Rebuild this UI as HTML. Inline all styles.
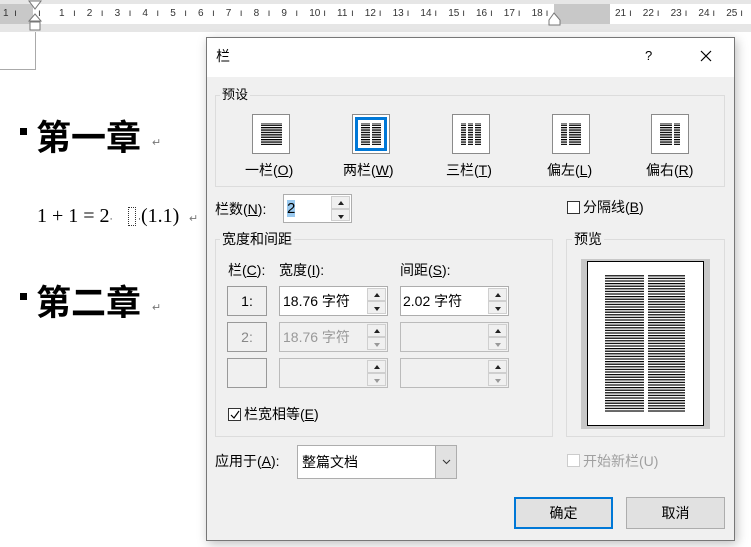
<!DOCTYPE html>
<html><head><meta charset="utf-8">
<style>
*{margin:0;padding:0;box-sizing:border-box}
body{width:751px;height:547px;overflow:hidden;background:#fff;position:relative;font-family:"Liberation Sans","Microsoft YaHei","Noto Sans CJK SC",sans-serif;font-size:13px;color:#000}
.a{position:absolute}
.t{position:absolute;white-space:nowrap;line-height:16px}
.box{position:absolute;border:1px solid #adadad;background:#fff}
.grp{position:absolute;border:1px solid #dcdcdc}
.lbl{position:absolute;background:#f0f0f0;padding:0 2px;line-height:16px;white-space:nowrap}
.spin{position:absolute;right:1px;top:1px;bottom:1px;width:19px}
.spin div{height:50%;border:1px solid #cfcfcf;background:#f0f0f0;position:relative}
.up:after{content:"";position:absolute;left:6px;top:4px;border-left:3px solid transparent;border-right:3px solid transparent;border-bottom:4px solid #222}
.dn:after{content:"";position:absolute;left:6px;top:5px;border-left:3px solid transparent;border-right:3px solid transparent;border-top:4px solid #222}
.dis .dn:after{border-top-color:#999}
.ico{position:absolute;width:38px;height:40px;border:1px solid #8a8a8a;background:#fff}
u{text-decoration:underline}
.cb{position:absolute;width:13px;height:13px;border:1px solid #333;background:#fff}
.hd{position:absolute;white-space:nowrap;font-size:35px;line-height:40px;font-weight:bold;font-family:'Noto Sans CJK SC',sans-serif}
.eq{position:absolute;white-space:nowrap;font-size:20px;line-height:22px;font-family:'Liberation Serif',serif}
</style></head><body>
<!-- ruler -->
<div class="a" style="left:0;top:0;width:751px;height:32px;background:#e6e6e6"></div>
<div class="a" style="left:0;top:4px;width:751px;height:20px;background:#fff"></div>
<div class="a" style="left:0;top:4px;width:33px;height:20px;background:#c8c8c8"></div>
<div class="a" style="left:554px;top:4px;width:56px;height:20px;background:#c8c8c8"></div>
<div class="t" style="left:3px;top:6px;font-size:10px;color:#333">1 &nbsp;ı</div>
<div class="t" id="rl" style="left:0;top:6px;font-size:10px;color:#333"></div>
<svg class="a" style="left:28px;top:0" width="16" height="34"><path d="M1 1h12l-6 8z" fill="#fff" stroke="#777"/><path d="M7 14l6 7H1z" fill="#fff" stroke="#777"/><rect x="2" y="22" width="10" height="8" fill="#fff" stroke="#777"/></svg>
<svg class="a" style="left:548px;top:12px" width="14" height="14"><path d="M6 1l6 7v5H1V8z" fill="#fff" stroke="#777"/></svg>
<div class="a" style="left:0;top:32px;width:36px;height:38px;border-right:1px solid #aaa;border-bottom:1px solid #aaa"></div>
<!-- doc -->
<div class="a" style="left:20px;top:128px;width:7px;height:7px;background:#000"></div>
<div class="hd" style="left:36px;top:116px">第一章</div>
<div class="t" style="left:152px;top:135px;font-size:11px;color:#777">↵</div>
<div class="eq" style="left:37px;top:205px">1 + 1 = 2<span style="font-size:9px">·</span></div>
<div class="a" style="left:128px;top:207px;width:8px;height:19px;border:1px dotted #333"></div>
<div class="eq" style="left:138px;top:205px"><span style="font-size:9px">·</span>(1.1)</div>
<div class="t" style="left:189px;top:211px;font-size:11px;color:#777">↵</div>
<div class="a" style="left:20px;top:293px;width:7px;height:7px;background:#000"></div>
<div class="hd" style="left:36px;top:281px">第二章</div>
<div class="t" style="left:152px;top:300px;font-size:11px;color:#777">↵</div>
<!-- dialog -->
<div class="a" style="left:206px;top:37px;width:529px;height:504px;background:#f0f0f0;border:1px solid #777;box-shadow:2px 3px 10px rgba(0,0,0,.25)">
<div class="a" style="left:0;top:0;width:527px;height:39px;background:#fff"></div>
</div>
<div class="t" style="left:216px;top:48px;font-size:14px">栏</div>
<div class="t" style="left:645px;top:48px;font-size:13px">?</div>
<svg class="a" style="left:700px;top:50px" width="12" height="12"><path d="M1 1l10 10M11 1L1 11" stroke="#000" stroke-width="1.2"/></svg>
<!-- 预设 -->
<div class="grp" style="left:215px;top:95px;width:510px;height:92px"></div>
<div class="lbl" style="left:220px;top:87px">预设</div>
<svg width="0" height="0" style="position:absolute"><defs><pattern id="ln" width="4" height="2.4" patternUnits="userSpaceOnUse"><rect width="4" height="1.3" fill="#000"/></pattern><pattern id="ln2" width="4" height="2.6" patternUnits="userSpaceOnUse"><rect width="4" height="1.2" fill="#000"/></pattern></defs></svg>
<div class="ico" style="left:252px;top:114px"><svg width="36" height="38"><rect x="8" y="8" width="21" height="22" fill="url(#ln)"/></svg></div>
<div class="ico" style="left:352px;top:114px"><div class="a" style="left:2px;top:2px;width:32px;height:34px;border:3px solid #0078d7"></div><svg class="a" width="36" height="38"><rect x="8" y="8" width="9" height="22" fill="url(#ln)"/><rect x="19" y="8" width="9" height="22" fill="url(#ln)"/></svg></div>
<div class="ico" style="left:452px;top:114px"><svg width="36" height="38"><rect x="8" y="8" width="5" height="22" fill="url(#ln)"/><rect x="15" y="8" width="5" height="22" fill="url(#ln)"/><rect x="22" y="8" width="6" height="22" fill="url(#ln)"/></svg></div>
<div class="ico" style="left:552px;top:114px"><svg width="36" height="38"><rect x="8" y="8" width="6" height="22" fill="url(#ln)"/><rect x="16" y="8" width="12" height="22" fill="url(#ln)"/></svg></div>
<div class="ico" style="left:651px;top:114px"><svg width="36" height="38"><rect x="8" y="8" width="12" height="22" fill="url(#ln)"/><rect x="22" y="8" width="6" height="22" fill="url(#ln)"/></svg></div>
<div class="t" style="left:245px;top:162px;font-size:14px">一栏(<u>O</u>)</div>
<div class="t" style="left:343px;top:162px;font-size:14px">两栏(<u>W</u>)</div>
<div class="t" style="left:446px;top:162px;font-size:14px">三栏(<u>T</u>)</div>
<div class="t" style="left:547px;top:162px;font-size:14px">偏左(<u>L</u>)</div>
<div class="t" style="left:646px;top:162px;font-size:14px">偏右(<u>R</u>)</div>
<!-- 栏数 -->
<div class="t" style="left:215px;top:201px;font-size:14px">栏数(<u>N</u>):</div>
<div class="box" style="left:283px;top:194px;width:69px;height:29px"><span class="a" style="left:3px;top:5px;background:#99c9ef;font-size:15px;line-height:17px">2</span><div class="spin"><div class="up"></div><div class="dn"></div></div></div>
<div class="cb" style="left:567px;top:201px"></div>
<div class="t" style="left:583px;top:199px;font-size:14px">分隔线(<u>B</u>)</div>
<!-- 宽度和间距 -->
<div class="grp" style="left:215px;top:239px;width:338px;height:198px"></div>
<div class="lbl" style="left:220px;top:231px;font-size:14px">宽度和间距</div>
<div class="t" style="left:228px;top:262px;font-size:14px">栏(<u>C</u>):</div>
<div class="t" style="left:279px;top:262px;font-size:14px">宽度(<u>I</u>):</div>
<div class="t" style="left:400px;top:262px;font-size:14px">间距(<u>S</u>):</div>
<div class="a" style="left:227px;top:286px;width:40px;height:30px;border:1px solid #999;text-align:center;line-height:28px;font-size:14px">1:</div>
<div class="a" style="left:227px;top:322px;width:40px;height:30px;border:1px solid #999;text-align:center;line-height:28px;font-size:14px;color:#888">2:</div>
<div class="a" style="left:227px;top:358px;width:40px;height:30px;border:1px solid #999"></div>
<div class="box" style="left:279px;top:286px;width:109px;height:30px"><span class="t" style="left:3px;top:6px;font-size:14px">18.76 字符</span><div class="spin"><div class="up"></div><div class="dn"></div></div></div>
<div class="box" style="left:400px;top:286px;width:109px;height:30px"><span class="t" style="left:2px;top:6px;font-size:14px">2.02 字符</span><div class="spin"><div class="up"></div><div class="dn"></div></div></div>
<div class="box dis" style="left:279px;top:322px;width:109px;height:30px;background:#f0f0f0;border-color:#bbb"><span class="t" style="left:3px;top:6px;font-size:14px;color:#999">18.76 字符</span><div class="spin"><div class="up"></div><div class="dn"></div></div></div>
<div class="box dis" style="left:400px;top:322px;width:109px;height:30px;background:#f0f0f0;border-color:#bbb"><div class="spin"><div class="up"></div><div class="dn"></div></div></div>
<div class="box dis" style="left:279px;top:358px;width:109px;height:30px;background:#f0f0f0;border-color:#bbb"><div class="spin"><div class="up"></div><div class="dn"></div></div></div>
<div class="box dis" style="left:400px;top:358px;width:109px;height:30px;background:#f0f0f0;border-color:#bbb"><div class="spin"><div class="up"></div><div class="dn"></div></div></div>
<div class="cb" style="left:228px;top:408px"><svg class="a" style="left:1px;top:1px" width="10" height="10"><path d="M1 5l3 3 5-7" stroke="#000" fill="none" stroke-width="1.2"/></svg></div>
<div class="t" style="left:244px;top:406px;font-size:14px">栏宽相等(<u>E</u>)</div>
<!-- 预览 -->
<div class="grp" style="left:566px;top:239px;width:159px;height:198px"></div>
<div class="lbl" style="left:572px;top:231px;font-size:14px">预览</div>
<div class="a" style="left:581px;top:259px;width:129px;height:170px;background:#c8c8c8"></div>
<div class="a" style="left:587px;top:261px;width:117px;height:165px;background:#fff;border:1px solid #000"></div>
<svg class="a" style="left:600px;top:270px" width="90" height="145"><rect x="5" y="5" width="39" height="137" fill="url(#ln2)"/><rect x="48" y="5" width="37" height="137" fill="url(#ln2)"/></svg>
<!-- bottom -->
<div class="t" style="left:215px;top:453px;font-size:14px">应用于(<u>A</u>):</div>
<div class="box" style="left:297px;top:445px;width:160px;height:34px"><span class="t" style="left:4px;top:8px;font-size:14px">整篇文档</span><div class="a" style="right:0;top:0;width:21px;height:32px;background:#e1e1e1;border-left:1px solid #adadad"><svg class="a" style="left:6px;top:13px" width="9" height="6"><path d="M1 1l3.5 3.5L8 1" stroke="#333" fill="none"/></svg></div></div>
<div class="cb" style="left:567px;top:454px;border-color:#ccc"></div>
<div class="t" style="left:583px;top:453px;font-size:14px;color:#a0a0a0">开始新栏(U)</div>
<div class="a" style="left:514px;top:497px;width:99px;height:32px;border:2px solid #0078d7;background:#e1e1e1;text-align:center;line-height:28px;font-size:14px">确定</div>
<div class="a" style="left:626px;top:497px;width:99px;height:32px;border:1px solid #adadad;background:#e1e1e1;text-align:center;line-height:30px;font-size:14px">取消</div>
<script>
var h='';for(var i=1;i<=25;i++){if(i==19||i==20)continue;var x=62+(i-1)*27.8;h+='<span style="position:absolute;left:'+(x-3)+'px">'+i+'</span><span style="position:absolute;left:'+(x+11)+'px">ı</span>';}
h+='<span style="position:absolute;left:38px">ı</span>';
document.getElementById('rl').innerHTML=h;
</script>
</body></html>
